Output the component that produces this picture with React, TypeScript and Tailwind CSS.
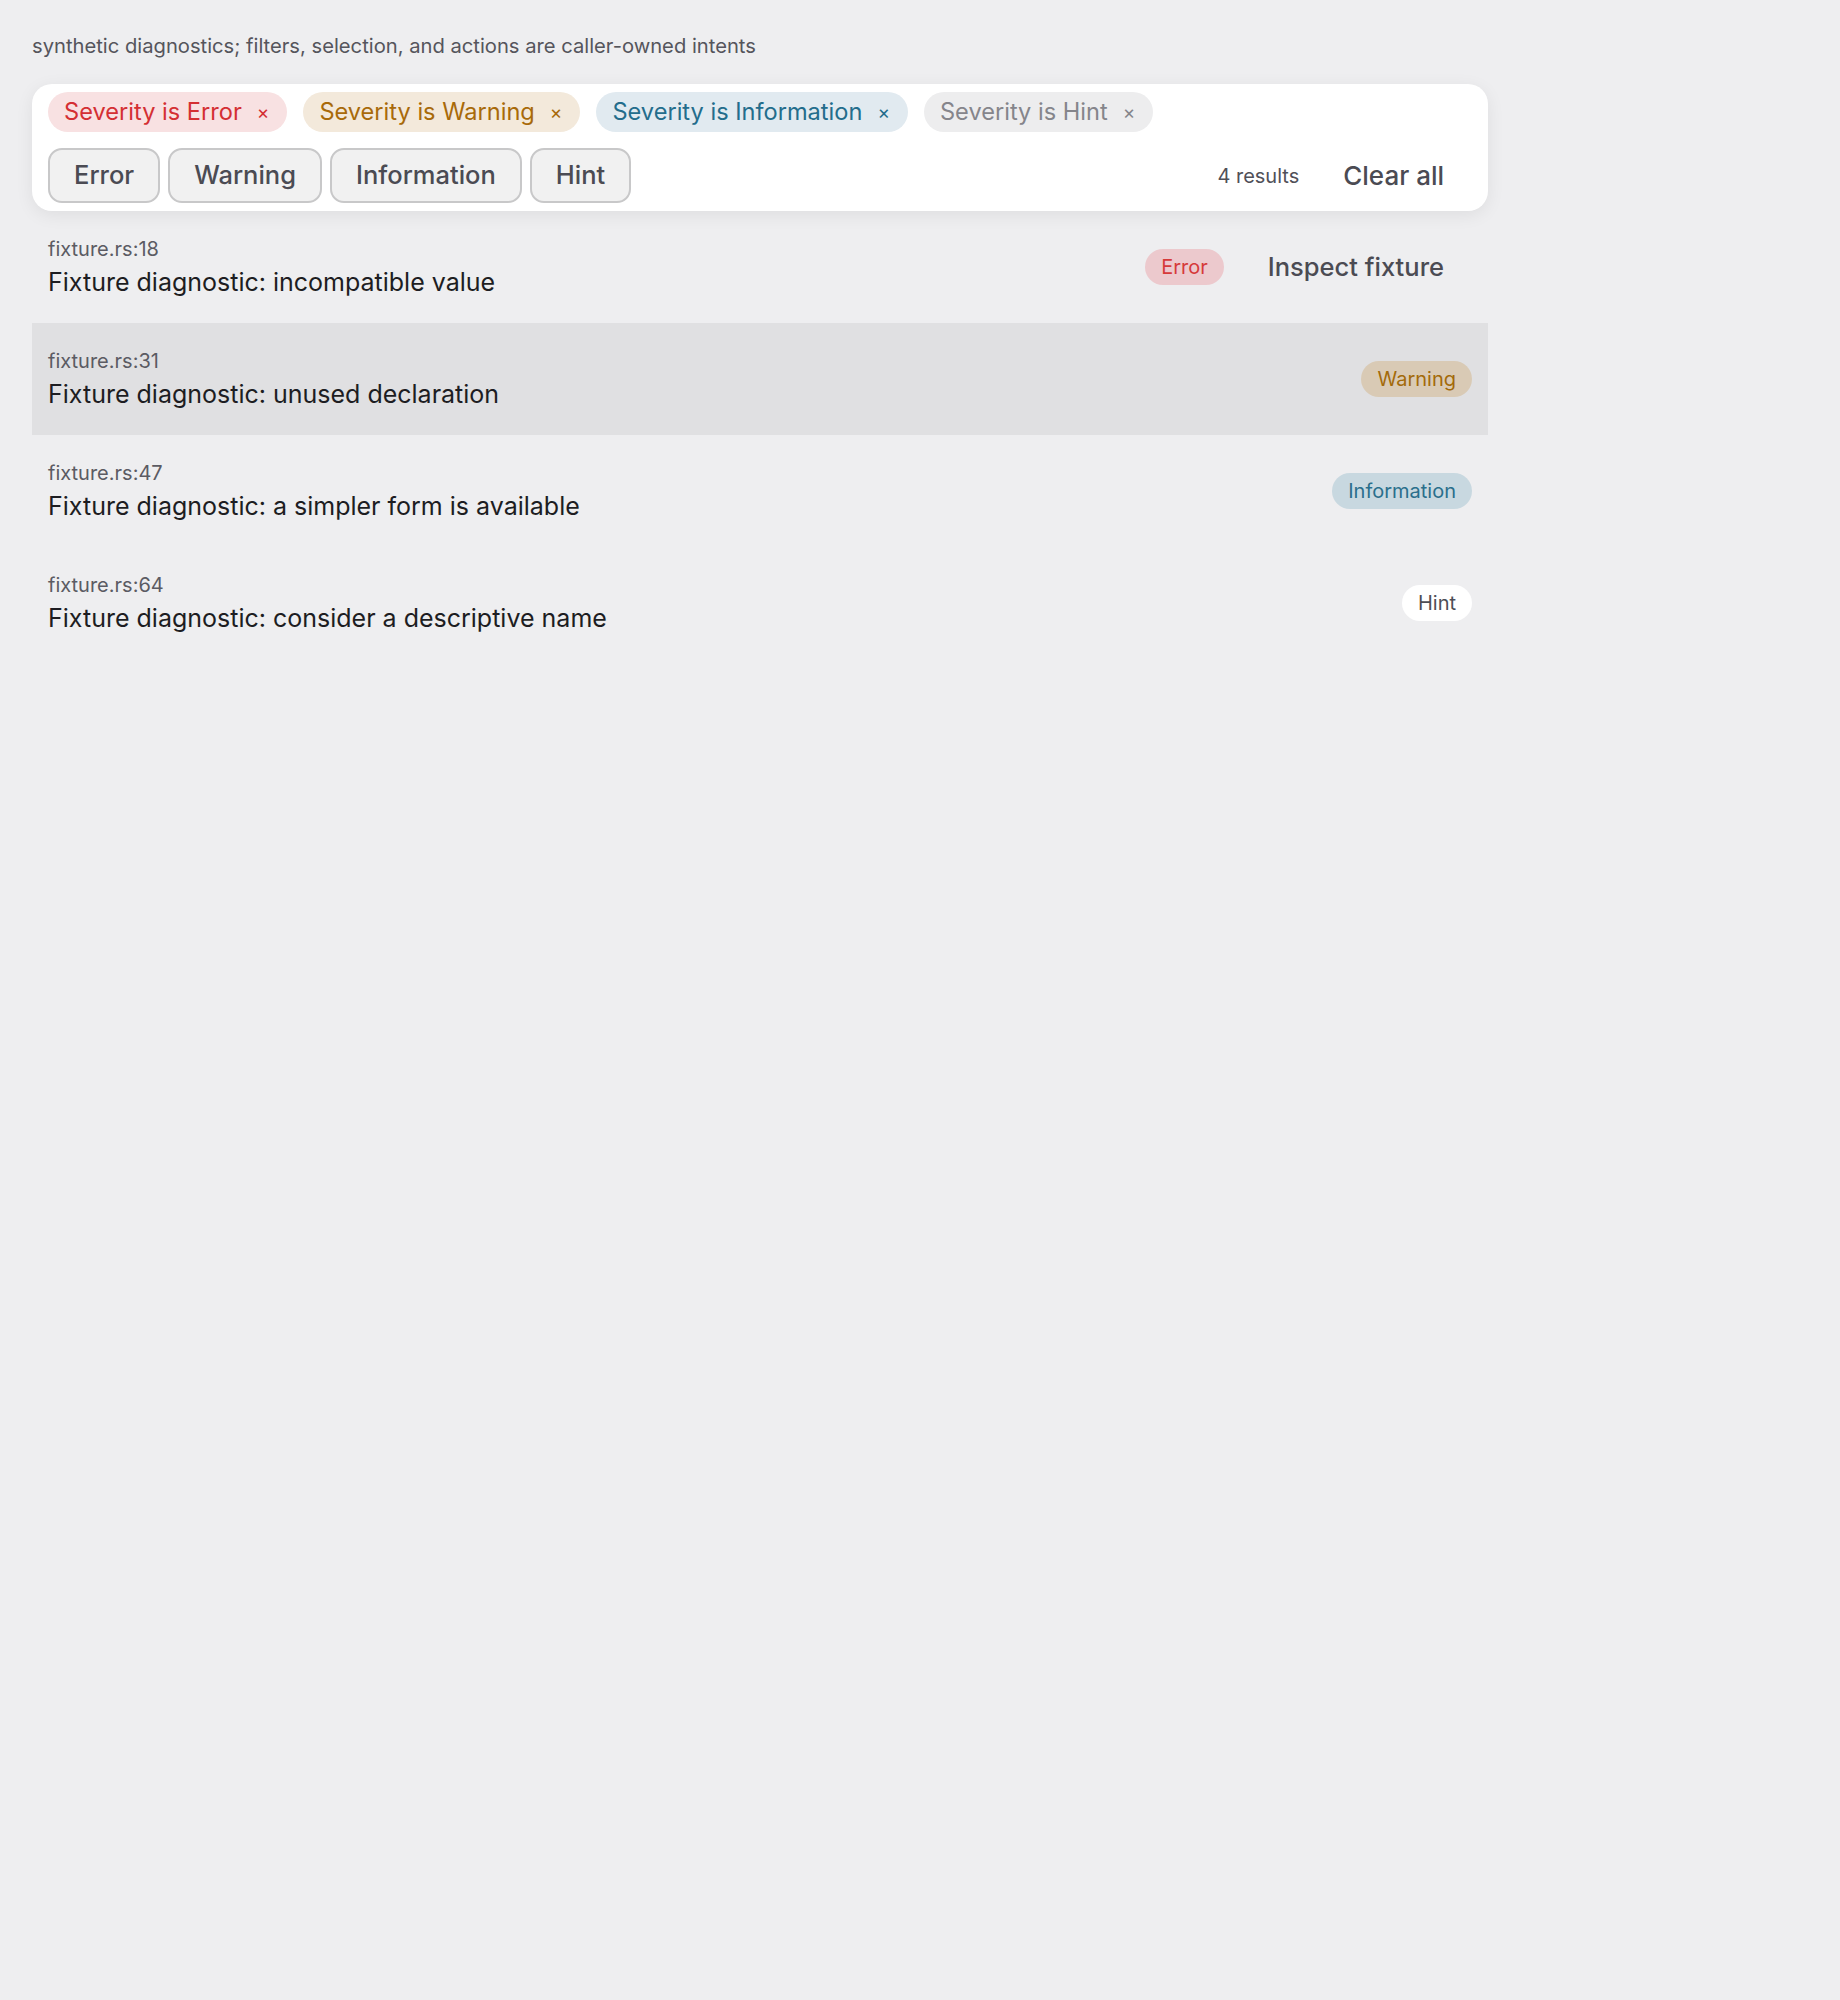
const chips = [
  { label: "Severity is Error", cls: "bg-[#f8e1e2] text-[#d42f33]" },
  { label: "Severity is Warning", cls: "bg-[#f3e9db] text-[#a86a0a]" },
  { label: "Severity is Information", cls: "bg-[#e1eaf0] text-[#236d8c]" },
  { label: "Severity is Hint", cls: "bg-[#ededee] text-[#85858b]" },
];

const toggles = ["Error", "Warning", "Information", "Hint"];

const rows = [
  {
    loc: "fixture.rs:18",
    msg: "Fixture diagnostic: incompatible value",
    sev: "Error",
    badge: "bg-[#ecc9cd] text-[#d63a3a]",
    action: true,
    selected: false,
  },
  {
    loc: "fixture.rs:31",
    msg: "Fixture diagnostic: unused declaration",
    sev: "Warning",
    badge: "bg-[#d9cab5] text-[#a36a0b]",
    action: false,
    selected: true,
  },
  {
    loc: "fixture.rs:47",
    msg: "Fixture diagnostic: a simpler form is available",
    sev: "Information",
    badge: "bg-[#c8d8e0] text-[#2a6f8c]",
    action: false,
    selected: false,
  },
  {
    loc: "fixture.rs:64",
    msg: "Fixture diagnostic: consider a descriptive name",
    sev: "Hint",
    badge: "bg-white text-[#4d4d55]",
    action: false,
    selected: false,
  },
];

export default function App() {
  return (
    <div className="min-h-screen bg-[#eeeef0] px-8 pt-8 font-['Inter',sans-serif]">
      <div className="w-[1456px]">
        <p className="text-[20.2px] leading-[28px] text-[#55555c]">
          synthetic diagnostics; filters, selection, and actions are caller-owned intents
        </p>

        <div className="mt-6 rounded-[20px] bg-white px-4 py-2 shadow-[0_4px_18px_rgba(0,0,0,0.07)]">
          <div className="flex flex-wrap gap-4">
            {chips.map((c) => (
              <span
                key={c.label}
                className={`flex h-10 items-center rounded-full pl-4 pr-[18px] text-[23.6px] ${c.cls}`}
              >
                {c.label}
                <span className="ml-[15px] text-[19px] leading-none">×</span>
              </span>
            ))}
          </div>

          <div className="mt-4 flex items-center">
            <div className="flex gap-2">
              {toggles.map((t) => (
                <button
                  key={t}
                  className="h-[55px] rounded-[14px] border-2 border-[#c8c8c9] bg-[#f1f1f1] px-6 text-[25.5px] font-medium text-[#4b4b53]"
                >
                  {t}
                </button>
              ))}
            </div>
            <span className="ml-auto text-[20px] text-[#505058]">4 results</span>
            <button className="ml-4 px-7 text-[26px] font-medium text-[#4b4b53]">Clear all</button>
          </div>
        </div>

        <div>
          {rows.map((r) => (
            <div
              key={r.loc}
              className={`flex h-[112px] items-center px-4 ${r.selected ? "bg-[#e0e0e2]" : ""}`}
            >
              <div className="flex flex-col">
                <span className="text-[20px] leading-[26px] text-[#5b5b63]">{r.loc}</span>
                <span className="mt-1 text-[25px] leading-[32px] text-[#1d1d22]">{r.msg}</span>
              </div>
              <div className="ml-auto flex items-center gap-4">
                <span className={`flex h-9 items-center rounded-full px-4 text-[20px] ${r.badge}`}>
                  {r.sev}
                </span>
                {r.action && (
                  <button className="px-7 text-[25.5px] font-medium text-[#4b4b53]">
                    Inspect fixture
                  </button>
                )}
              </div>
            </div>
          ))}
        </div>
      </div>
    </div>
  );
}
